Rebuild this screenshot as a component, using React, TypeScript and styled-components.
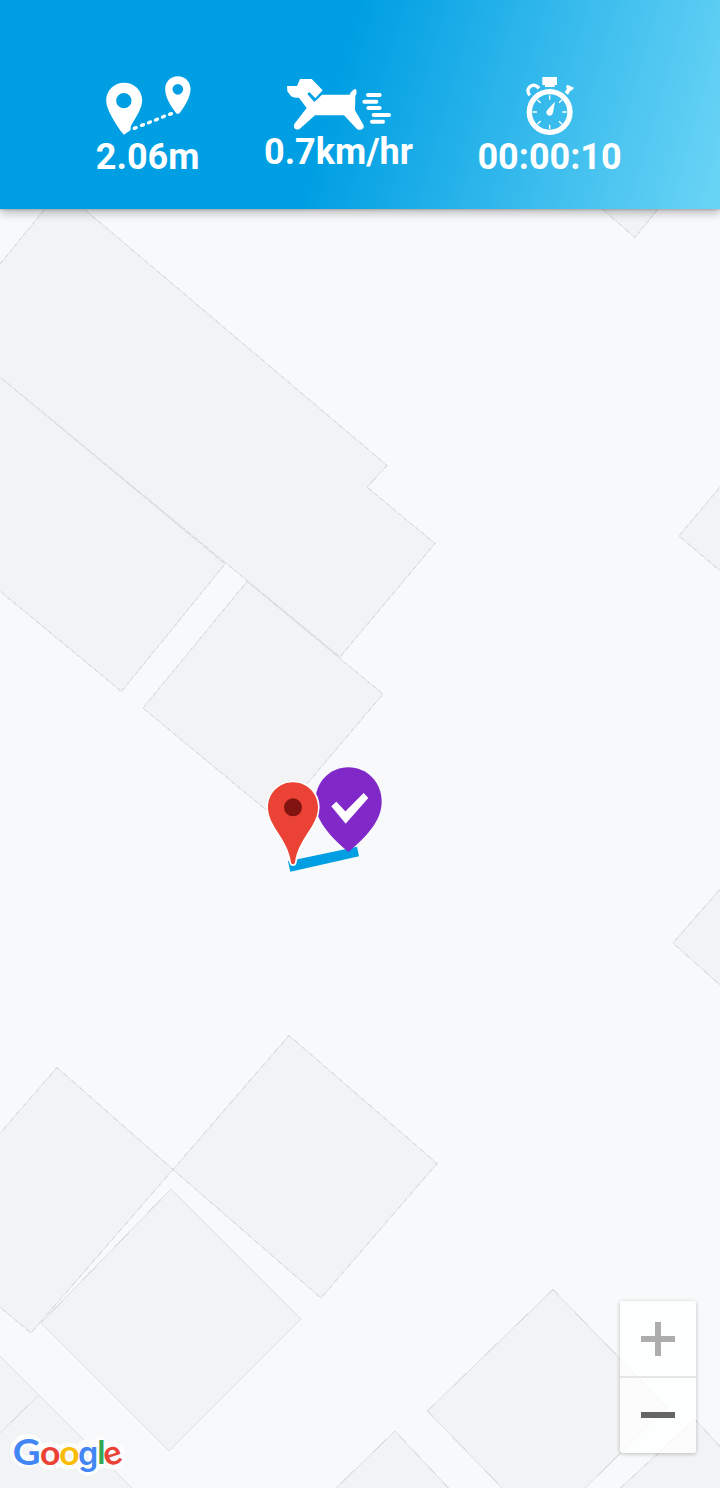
import React from "react";
import styled, { createGlobalStyle } from "styled-components";

const GlobalStyle = createGlobalStyle`
  * { box-sizing: border-box; }
  body { margin: 0; background: #f8f9fb; font-family: Roboto, sans-serif; }
`;

const Screen = styled.main`
  display: flex;
  flex-direction: column;
  width: 720px;
  height: 1488px;
  overflow: hidden;
`;

const Header = styled.header`
  position: relative;
  z-index: 1;
  flex: 0 0 209px;
  display: flex;
  align-items: flex-start;
  justify-content: space-around;
  padding: 76px 66px 0 63.5px;
  background: linear-gradient(106deg, #009fe3 46.5%, #67d3f5 98%);
  box-shadow: 0 4px 9px rgba(0, 0, 0, 0.26), 0 1px 2px rgba(0, 0, 0, 0.16);
`;

const Stat = styled.div`
  display: flex;
  flex-direction: column;
  align-items: center;
  gap: 3px;
`;

const StatIcon = styled.svg<{ $w: number; $h: number }>`
  display: block;
  width: ${(p) => p.$w}px;
  height: ${(p) => p.$h}px;
  fill: #fff;
`;

const StatValue = styled.span`
  color: #fff;
  font-size: 36px;
  font-weight: 700;
  line-height: 36px;
  white-space: nowrap;
`;

const MapArea = styled.section`
  position: relative;
  flex: 1;
  background: #f8f9fb;
`;

const MapCanvas = styled.svg`
  display: block;
  width: 720px;
  height: 1279px;
`;

const Building = styled.polygon`
  fill: #f1f3f4;
  stroke: #dedfe0;
  stroke-width: 1;
  shape-rendering: crispEdges;
`;

const ZoomControls = styled.div`
  position: absolute;
  right: 24px;
  bottom: 35px;
  display: flex;
  flex-direction: column;
  width: 76px;
  height: 152px;
  border-radius: 3px;
  background: rgba(255, 255, 255, 0.75);
  box-shadow: 0 1px 4px rgba(0, 0, 0, 0.24);
`;

const ZoomButton = styled.button<{ $color: string }>`
  flex: 0 0 75px;
  display: flex;
  align-items: center;
  justify-content: center;
  padding: 1px 0 0;
  border: 0;
  background: none;
  color: ${(p) => p.$color};
  & + & {
    flex-basis: 77px;
    padding: 0 0 1px;
    border-top: 2px solid #e6e6e7;
  }
`;

const Logo = styled.svg`
  position: absolute;
  left: 8px;
  bottom: 8px;
  width: 124px;
  height: 52px;
  overflow: visible;
`;

const LogoLetter = styled.text<{ $font?: string; $weight?: number }>`
  font-family: ${(p) => p.$font || "Lato"}, sans-serif;
  font-weight: ${(p) => p.$weight || 700};
  stroke: none;
`;

const buildings = [
  "-5,270 61,189.5 387,465.5 367,487 435,543.5 340,657 -5,373",
  "-5,373 225,564 121.500,691.500 -5,587",
  "247,581.500 383,694 290,804 275,810 265,809 143,708",
  "725,481 679,536 725,575",
  "725,883.500 673,943 725,989.500",
  "289,1035.500 437,1163.500 321,1298 173,1169.500",
  "57,1067.500 173,1169.500 31,1333 -5,1303 -5,1139",
  "171,1189 301,1319 169,1451 41,1323",
  "-5,1351 137,1493 -5,1493",
  "553,1289.500 427.500,1411 507,1493 580,1493 667,1407.500",
  "395,1431 331,1493 453,1493",
  "695,1419.500 615,1493 725,1493 725,1452",
  "597,204.500 635,237.500 662,204",
];

const DistanceIcon = () => (
  <StatIcon $w={86} $h={60} viewBox="73.5 47 258 180">
    <path
      fillRule="evenodd"
      d="M131 67C101 67 77 90 77 120C77 141 91 165 106 190Q118 210 130 223L150 210L151 197C168 169 185 143 185 120C185 90 161 67 131 67ZM130 98A23 23 0 1 1 130 144A23 23 0 1 1 130 98Z"
    />
    <path
      fillRule="evenodd"
      d="M292 48C271 48 254 64 254 86C254 110 270 136 286 157Q292 164 298 157C314 136 330 110 330 86C330 64 313 48 292 48ZM292 71A16 16 0 1 1 292 103A16 16 0 1 1 292 71Z"
    />
    {[[164, 203], [186, 194], [207, 186], [228, 178], [249, 169], [270, 161]].map(([x, y]) => (
      <ellipse key={x} cx={x} cy={y} rx="8.5" ry="5.5" transform={`rotate(-22 ${x} ${y})`} />
    ))}
  </StatIcon>
);

const DogIcon = () => (
  <StatIcon $w={105} $h={55} viewBox="93 48 315 165">
    <path d="M96 78L126 78L135 57L170 57L203 91L181 115L163 96L157 102L178 126L201 104L284 104Q287 93 301 86Q309 94 301 108L300 151L326 196Q328 204 321 208Q312 212 305 206L267 166L180 166L138 203Q131 211 122 208Q114 203 118 192L155 144L132 113Q111 115 106 106L97 94Z" />
    <g stroke="#fff" strokeWidth="12" strokeLinecap="round">
      <path d="M339 105H374M328 125H364M340 144H374M356 165H402M351 185H384" />
    </g>
  </StatIcon>
);

const StopwatchIcon = () => (
  <StatIcon $w={50} $h={60} viewBox="165 48 150 180">
    <path d="M217 51H261V75H254V81H225V75H217Z" />
    <path d="M179 106Q168 90 180 80Q194 70 207 85" fill="none" stroke="#fff" strokeWidth="10" />
    <path d="M292 74L312 83L306 91L301 92L294 104L284 97L291 86L288 81Z" />
    <circle cx="239" cy="156" r="61" fill="none" stroke="#fff" strokeWidth="16" />
    <g stroke="#fff" strokeWidth="4">
      <path d="M239 106V119M239 194V207M188 156H201M277 156H290M202 119L212 129M276 119L267 128M202 193L212 183M276 193L267 184" />
    </g>
    <path d="M255 125L249 158Q246 168 238 167Q229 166 229 157Q229 152 234 148Z" />
  </StatIcon>
);

export default function App() {
  return (
    <>
      <GlobalStyle />
      <Screen>
        <Header>
          <Stat>
            <DistanceIcon />
            <StatValue>2.06m</StatValue>
          </Stat>
          <Stat>
            <DogIcon />
            <StatValue>0.7km/hr</StatValue>
          </Stat>
          <Stat>
            <StopwatchIcon />
            <StatValue>00:00:10</StatValue>
          </Stat>
        </Header>
        <MapArea>
          <MapCanvas viewBox="0 209 720 1279">
            {buildings.map((points) => (
              <Building key={points} points={points} />
            ))}
            <path d="M39 1395L-2 1435" stroke="#dedfe0" shapeRendering="crispEdges" />
            <g transform="translate(250 755) scale(0.33333)">
              <path d="M114 319L321 275L327 304L121 350Z" fill="#009fe3" />
              <path
                d="M295 37C239 37 196 82 196 140C196 196 238 242 295 291C352 242 395 196 395 140C395 82 351 37 295 37Z"
                fill="#8128c8"
              />
              <path d="M245 154L259 141L286 170L341 115L354 129L287 205Z" fill="#fff" stroke="#fff" strokeWidth="2" />
              <path
                d="M129 82C87 82 54 115 54 157C54 215 114 251 123 322Q124 328 129 328Q134 328 135 322C144 251 204 215 204 157C204 115 171 82 129 82Z"
                fill="#fff"
                stroke="#fff"
                strokeWidth="10"
              />
              <path
                d="M129 82C87 82 54 115 54 157C54 215 114 251 123 322Q124 328 129 328Q134 328 135 322C144 251 204 215 204 157C204 115 171 82 129 82Z"
                fill="#ea4335"
              />
              <circle cx="129" cy="157" r="27" fill="#811411" />
            </g>
          </MapCanvas>
          <Logo viewBox="8 1428 124 52" aria-label="Google">
            <g opacity="0.7" stroke="#fff" strokeWidth="12" strokeLinecap="round" fill="none">
              <path d="M36 1444A11 11 0 1 0 38 1453M42 1456A8 8 0 1 0 58 1456A8 8 0 1 0 42 1456M61 1456A8 8 0 1 0 77 1456A8 8 0 1 0 61 1456M94 1449V1464Q93 1470 87 1470L83 1468M80 1456A8 8 0 1 0 95 1456A8 8 0 1 0 80 1456M101 1442V1463M119 1451A8 8 0 1 0 119 1460" />
            </g>
            <LogoLetter x="12.800" y="1464.600" fontSize="36.500" textLength="27.800" lengthAdjust="spacingAndGlyphs" fill="#4285f4">G</LogoLetter>
            <LogoLetter x="40.100" y="1464.800" fontSize="35" textLength="20.400" lengthAdjust="spacingAndGlyphs" fill="#ea4335">o</LogoLetter>
            <LogoLetter x="59.200" y="1464.800" fontSize="35" textLength="20.400" lengthAdjust="spacingAndGlyphs" fill="#fbbc05">o</LogoLetter>
            <LogoLetter x="78" y="1464.700" fontSize="32.500" $font="Inter" $weight={600} textLength="20.300" lengthAdjust="spacingAndGlyphs" fill="#4285f4">g</LogoLetter>
            <LogoLetter x="97.300" y="1464" fontSize="33" fill="#34a853">l</LogoLetter>
            <LogoLetter x="103.600" y="1464.600" fontSize="34" fill="#ea4335" transform="rotate(-18 113 1456)">e</LogoLetter>
          </Logo>
          <ZoomControls>
            <ZoomButton $color="#adadad" aria-label="Zoom in">
              <svg width="34" height="34" fill="currentColor">
                <path d="M14 0h6v14h14v6H20v14h-6V20H0v-6h14z" />
              </svg>
            </ZoomButton>
            <ZoomButton $color="#656565" aria-label="Zoom out">
              <svg width="34" height="6" fill="currentColor">
                <path d="M0 0h34v6H0z" />
              </svg>
            </ZoomButton>
          </ZoomControls>
        </MapArea>
      </Screen>
    </>
  );
}
